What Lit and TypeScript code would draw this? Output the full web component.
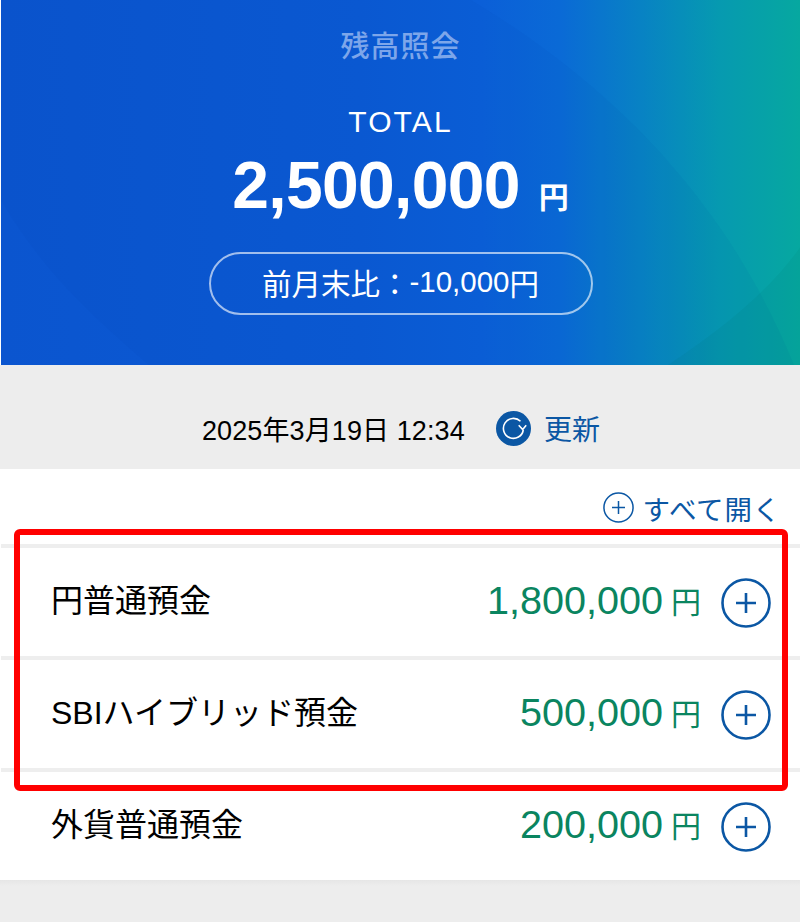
import { LitElement, html, css } from "lit";
import { customElement } from "lit/decorators.js";

const plus = (size: number, sw: number, arm: number) => html`<svg class="plus" width=${size} height=${size} viewBox="0 0 ${size} ${size}" fill="none" stroke="#0b57a4">
  <circle cx=${size / 2} cy=${size / 2} r=${size / 2 - sw / 2 - 0.2} stroke-width=${sw}></circle>
  <path d="M${size / 2 - arm} ${size / 2}H${size / 2 + arm}M${size / 2} ${size / 2 - arm}V${size / 2 + arm}" stroke-width=${sw}></path>
</svg>`;

const rows = [
  ["円普通預金", "1,800,000"],
  ["SBIハイブリッド預金", "500,000"],
  ["外貨普通預金", "200,000"],
];

@customElement("app-root")
export class AppRoot extends LitElement {
  static styles = css`
    :host {
      display: block;
      position: relative;
      width: 800px;
      height: 922px;
      overflow: hidden;
      background: #ededed;
      font-family: "Liberation Sans", "Noto Sans CJK JP", sans-serif;
      color: #000;
    }
    .page { padding-left: 1px; background: #fff; height: 922px; }
    .hero {
      position: relative;
      height: 365px;
      box-sizing: border-box;
      padding-top: 22px;
      display: flex;
      flex-direction: column;
      align-items: center;
      color: #fff;
      background: linear-gradient(90deg, #0b55cf 0%, #0b5ad4 45%, #0b5fd8 60%, #0a6ad6 70%, #0882c4 80%, #069ab0 90%, #06a8a0 100%);
    }
    .hero > * { position: relative; }
    .hero > svg.waves { position: absolute; left: 0; top: 0; }
    .title {
      font-family: "Noto Sans CJK JP", sans-serif;
      font-size: 29px;
      font-weight: 500;
      line-height: 44px;
      color: #7da6ea;
      letter-spacing: 1px;
    }
    .total {
      margin-top: 36px;
      font-size: 30px;
      line-height: 40px;
      letter-spacing: 2.1px;
    }
    .amount {
      display: flex;
      align-items: baseline;
      margin-top: 8px;
      height: 70px;
      line-height: 70px;
      font-weight: 700;
    }
    .amount b { font-size: 66px; letter-spacing: -0.7px; }
    .amount span {
      margin-left: 19px;
      font-family: "Noto Sans CJK JP", sans-serif;
      font-size: 30px;
      font-weight: 700;
    }
    .pill {
      margin-top: 32px;
      width: 384px;
      height: 63px;
      box-sizing: border-box;
      border: 2px solid rgba(255, 255, 255, 0.62);
      border-radius: 32px;
      padding-bottom: 4px;
      display: flex;
      align-items: center;
      justify-content: center;
      font-size: 29.5px;
      font-family: "Noto Sans CJK JP", sans-serif;
    }
    .pill .num { font-family: "Liberation Sans", sans-serif; }
    .stamp {
      height: 104px;
      background: #ededed;
      margin-left: -1px;
      display: flex;
      align-items: center;
      padding: 50px 0 28px 202px;
      font-size: 27px;
      box-sizing: border-box;
    }
    .stamp .time { width: 294px; white-space: nowrap; letter-spacing: 0.1px; }
    .stamp .jp { font-family: "Noto Sans CJK JP", sans-serif; }
    .update {
      display: flex;
      align-items: center;
      gap: 13px;
      color: #0b57a4;
      font-family: "Noto Sans CJK JP", sans-serif;
      font-size: 28px;
    }
    .open {
      height: 75px;
      box-sizing: border-box;
      display: flex;
      align-items: center;
      justify-content: flex-end;
      gap: 9px;
      padding: 2px 19px 0 0;
      color: #0b57a4;
      font-family: "Noto Sans CJK JP", sans-serif;
      font-size: 27.5px;
      letter-spacing: 0.8px;
    }
    .row {
      height: 112px;
      box-sizing: border-box;
      border-top: 4px solid #eeeeee;
      display: flex;
      align-items: center;
      padding: 0 29px 0 50px;
    }
    .row .name { flex: 1; font-size: 32px; white-space: nowrap; padding-bottom: 8px; }
    .row .val {
      color: #0a8560;
      font-size: 39.6px;
      white-space: nowrap;
      display: flex;
      align-items: center;
      padding-bottom: 4px;
    }
    .row .val span {
      font-family: "Noto Sans CJK JP", sans-serif;
      font-size: 30px;
      line-height: 40px;
      margin-left: 8px;
    }
    .plus { display: block; flex: none; }
    .row .plus { margin: 2px 0 0 20px; }
    .foot {
      height: 42px;
      margin-left: -1px;
      background: linear-gradient(#e6e6e6, #ededed 6px);
    }
    .mark {
      position: absolute;
      left: 14px;
      top: 529px;
      width: 774px;
      height: 262px;
      box-sizing: border-box;
      border: 6px solid #ff0000;
      border-radius: 6px;
      pointer-events: none;
    }
  `;

  render() {
    return html`<div class="page">
      <section class="hero">
        <svg class="waves" width="799" height="365" viewBox="0 0 799 365">
          <path d="M470 0C620 90 730 210 793 365H148C95 320 40 270 0 200V0Z" fill="#063a96" fill-opacity="0.05"></path>
          <path d="M800 246C770 290 720 330 667 365H800Z" fill="#00605a" fill-opacity="0.07"></path>
        </svg>
        <div class="title">残高照会</div>
        <div class="total">TOTAL</div>
        <div class="amount"><b>2,500,000</b><span>円</span></div>
        <div class="pill">前月末比：<span class="num">-10,000</span>円</div>
      </section>
      <section class="stamp">
        <div class="time">2025<span class="jp">年</span>3<span class="jp">月</span>19<span class="jp">日</span> 12:34</div>
        <div class="update">
          <svg width="35" height="35" viewBox="0 0 35 35" fill="none">
            <circle cx="17.5" cy="17.5" r="17.5" fill="#0b57a4"></circle>
            <path d="M24.5 10.3A10 10 0 1 0 27.3 19" stroke="#fff" stroke-width="1.6"></path>
            <path d="M22.7 14.3L26.7 18.6L30.2 14.3" stroke="#fff" stroke-width="1.6"></path>
          </svg>
          更新
        </div>
      </section>
      <div class="open">${plus(31, 1.5, 6.5)}すべて開く</div>
      ${rows.map(
        ([name, val]) => html`<div class="row">
          <div class="name">${name}</div>
          <div class="val">${val}<span>円</span></div>
          ${plus(50, 2.6, 10)}
        </div>`
      )}
      <div class="foot"></div>
    </div>
    <div class="mark"></div>`;
  }
}
